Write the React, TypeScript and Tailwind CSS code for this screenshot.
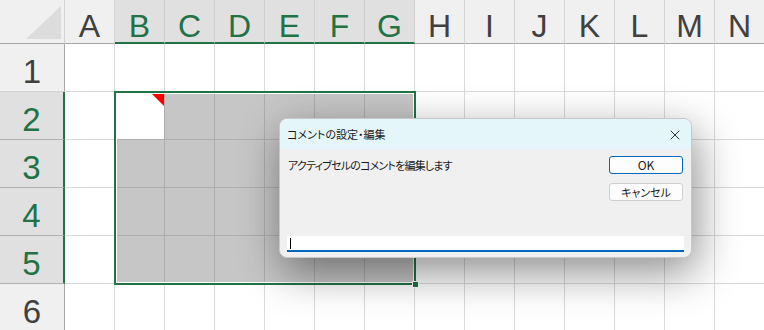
import { X } from "lucide-react";

const cols = ["A", "B", "C", "D", "E", "F", "G", "H", "I", "J", "K", "L", "M", "N"];
const rows = [1, 2, 3, 4, 5, 6];

const isSelCol = (c: number) => c >= 1 && c <= 6;
const isSelRow = (r: number) => r >= 2 && r <= 5;

const Sheet = () => {
  return (
    <div className="grid grid-cols-[65px_repeat(14,50px)] grid-rows-[44px_repeat(6,48px)] font-['Liberation_Sans',Arial,sans-serif] leading-none">
      {/* corner */}
      <div className="relative bg-[#f0f0f0] border-r border-b border-r-[#d4d4d4] border-b-[#a8a8a8]">
        <div className="absolute right-[3px] bottom-[4px] w-0 h-0 border-b-[33px] border-l-[35px] border-b-[#dcdcdc] border-l-transparent" />
      </div>
      {cols.map((c, i) =>
        isSelCol(i) ? (
          <div
            key={c}
            className="flex items-center justify-center bg-[#e0e0e0] border-r border-r-[#cfcfcf] border-b-2 border-b-[#217346] text-[32px] text-[#217346] pt-[9px]"
          >
            {c}
          </div>
        ) : (
          <div
            key={c}
            className="flex items-center justify-center bg-[#f0f0f0] border-r border-r-[#d4d4d4] border-b border-b-[#a8a8a8] text-[32px] text-[#404040] pt-[9px]"
          >
            {c}
          </div>
        )
      )}
      {rows.map((r) => (
        <>
          {isSelRow(r) ? (
            <div
              key={"h" + r}
              className="flex items-center justify-center bg-[#e0e0e0] border-r-2 border-r-[#217346] border-b border-b-[#b0b0b0] text-[33px] text-[#217346] pt-[8px]"
            >
              {r}
            </div>
          ) : (
            <div
              key={"h" + r}
              className="flex items-center justify-center bg-[#f0f0f0] border-r border-r-[#a8a8a8] border-b border-b-[#d4d4d4] text-[33px] text-[#404040] pt-[8px]"
            >
              {r}
            </div>
          )}
          {cols.map((c, i) => {
            const sel = isSelCol(i) && isSelRow(r);
            const active = i === 1 && r === 2;
            if (active) {
              return (
                <div key={c + r} className="relative bg-white border-r border-b border-[#adadad]">
                  <div className="absolute top-0 right-0 w-0 h-0 border-t-[14px] border-l-[14px] border-t-[#ff0000] border-l-transparent" />
                </div>
              );
            }
            return (
              <div
                key={c + r}
                className={
                  sel
                    ? "bg-[#c6c6c6] border-r border-b border-[#adadad]"
                    : "bg-white border-r border-b border-[#dadada]"
                }
              />
            );
          })}
        </>
      ))}
    </div>
  );
};

const CommentDialog = () => {
  return (
    <div className="absolute left-[279px] top-[118px] w-[413px] h-[140px] flex flex-col rounded-[8px] overflow-hidden bg-[#f0f0f0] border border-[#c8c8c8] shadow-[4px_14px_44px_rgba(0,0,0,0.45)] font-['Noto_Sans_CJK_JP','Noto_Sans',sans-serif] text-[11px] text-[#1a1a1a] [font-feature-settings:'palt']">
      <div className="h-[30px] shrink-0 flex items-center justify-between pl-[7px] pr-[8px] bg-[#e5f6fa]">
        <span className="leading-none">コメントの設定・編集</span>
        <X size={16} strokeWidth={1.4} className="text-[#222] mt-[1px]" />
      </div>
      <div className="flex-1 flex flex-col px-[7px] pt-[7px] pb-[5px]">
        <div className="flex justify-between">
          <span className="pt-[1px] pl-[1px] leading-[16px] tracking-[-0.8px]">アクティブセルのコメントを編集します</span>
          <div className="flex flex-col gap-[9px] mr-[1px]">
            <button className="w-[74px] h-[18px] rounded-[3px] border border-[#0067c0] bg-[#fdfdfd] text-[12px] leading-none">
              OK
            </button>
            <button className="w-[74px] h-[18px] rounded-[3px] border border-[#cfcfcf] bg-[#fdfdfd] text-[11px] leading-none">
              キャンセル
            </button>
          </div>
        </div>
        <div className="mt-auto h-[16px] bg-white border-b-2 border-[#0067c0] flex items-center pl-[3px]">
          <div className="w-px h-[11px] bg-black" />
        </div>
      </div>
    </div>
  );
};

export default function App() {
  return (
    <div className="relative w-[764px] h-[330px] overflow-hidden bg-white">
      <Sheet />
      {/* selection outline */}
      <div className="absolute left-[114px] top-[91px] w-[302px] h-[194px] border-2 border-[#217346] shadow-[inset_0_0_0_1px_white] pointer-events-none" />
      <div className="absolute left-[412px] top-[281px] w-[7px] h-[7px] bg-[#217346] border border-white" />
      <CommentDialog />
    </div>
  );
}
